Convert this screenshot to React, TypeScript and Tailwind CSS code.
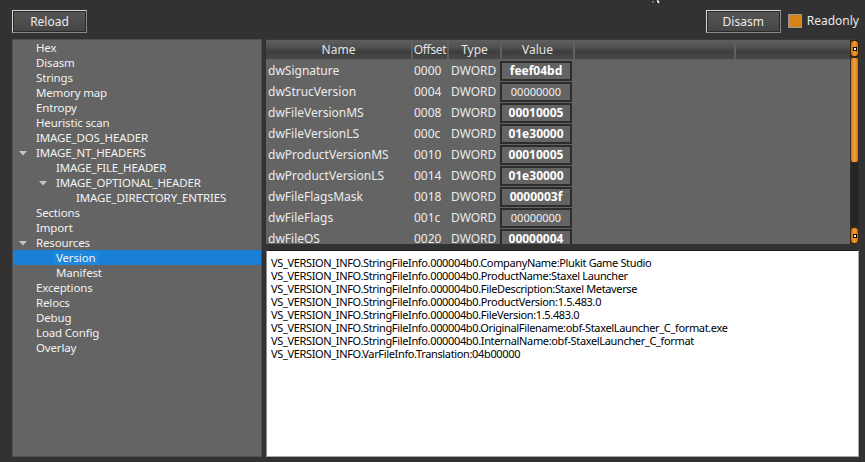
import React from 'react';

type Node = { label: string; level: number; open?: boolean; selected?: boolean };

const TREE: Node[] = [
  { label: 'Hex', level: 1 },
  { label: 'Disasm', level: 1 },
  { label: 'Strings', level: 1 },
  { label: 'Memory map', level: 1 },
  { label: 'Entropy', level: 1 },
  { label: 'Heuristic scan', level: 1 },
  { label: 'IMAGE_DOS_HEADER', level: 1 },
  { label: 'IMAGE_NT_HEADERS', level: 1, open: true },
  { label: 'IMAGE_FILE_HEADER', level: 2 },
  { label: 'IMAGE_OPTIONAL_HEADER', level: 2, open: true },
  { label: 'IMAGE_DIRECTORY_ENTRIES', level: 3 },
  { label: 'Sections', level: 1 },
  { label: 'Import', level: 1 },
  { label: 'Resources', level: 1, open: true },
  { label: 'Version', level: 2, selected: true },
  { label: 'Manifest', level: 2 },
  { label: 'Exceptions', level: 1 },
  { label: 'Relocs', level: 1 },
  { label: 'Debug', level: 1 },
  { label: 'Load Config', level: 1 },
  { label: 'Overlay', level: 1 },
];

type Row = { name: string; offset: string; value: string; bold: boolean };

const ROWS: Row[] = [
  { name: 'dwSignature', offset: '0000', value: 'feef04bd', bold: true },
  { name: 'dwStrucVersion', offset: '0004', value: '00000000', bold: false },
  { name: 'dwFileVersionMS', offset: '0008', value: '00010005', bold: true },
  { name: 'dwFileVersionLS', offset: '000c', value: '01e30000', bold: true },
  { name: 'dwProductVersionMS', offset: '0010', value: '00010005', bold: true },
  { name: 'dwProductVersionLS', offset: '0014', value: '01e30000', bold: true },
  { name: 'dwFileFlagsMask', offset: '0018', value: '0000003f', bold: true },
  { name: 'dwFileFlags', offset: '001c', value: '00000000', bold: false },
  { name: 'dwFileOS', offset: '0020', value: '00000004', bold: true },
];

const INFO = [
  'VS_VERSION_INFO.StringFileInfo.000004b0.CompanyName:Plukit Game Studio',
  'VS_VERSION_INFO.StringFileInfo.000004b0.ProductName:Staxel Launcher',
  'VS_VERSION_INFO.StringFileInfo.000004b0.FileDescription:Staxel Metaverse',
  'VS_VERSION_INFO.StringFileInfo.000004b0.ProductVersion:1.5.483.0',
  'VS_VERSION_INFO.StringFileInfo.000004b0.FileVersion:1.5.483.0',
  'VS_VERSION_INFO.StringFileInfo.000004b0.OriginalFilename:obf-StaxelLauncher_C_format.exe',
  'VS_VERSION_INFO.StringFileInfo.000004b0.InternalName:obf-StaxelLauncher_C_format',
  'VS_VERSION_INFO.VarFileInfo.Translation:04b00000',
];

const font = { fontFamily: '"Noto Sans", "Open Sans", sans-serif' };

const Btn = ({ children }: { children: React.ReactNode }) => (
  <button className="h-[23px] w-[75px] border border-[#d4d4d4] border-r-[#8a8a8a] border-b-[#8a8a8a] bg-[linear-gradient(to_bottom,#555555,#454545)] text-[12px] text-[#ececec] shadow-[inset_0_0_0_1px_#2a2a2a]">
    {children}
  </button>
);

const Arrow = () => (
  <svg width="8" height="5" viewBox="0 0 8 5" className="absolute top-[5px]" style={{ left: -14 }}>
    <path d="M0 0 H8 L4 4.5 Z" fill="#c4c4c4" />
  </svg>
);

const ScrollCap = () => (
  <div className="flex h-[15px] shrink-0 items-center justify-center rounded-[3px] bg-[linear-gradient(to_right,#c66e10,#f59a2a,#c66e10)] shadow-[0_0_0_1px_#3a2208]">
    <div className="flex h-[4px] w-[4px] items-center justify-center bg-black">
      <div className="h-[2px] w-[2px] bg-white" />
    </div>
  </div>
);

export default function App() {
  return (
    <div className="relative h-[462px] w-[865px] overflow-hidden bg-[#323232] text-[12px]" style={font}>
      {/* mouse cursor fragment */}
      <svg width="12" height="6" viewBox="0 0 12 6" className="absolute left-[650px] top-0">
        <path d="M1 0 L3 3 L5 2 Z M6 0 L8 4 L10 3 L9 0 Z" fill="#ffffff" stroke="#000" strokeWidth="0.6" />
      </svg>

      {/* top bar */}
      <div className="flex h-[39px] items-start pl-[12px] pr-[6px] pt-[10px]">
        <Btn>Reload</Btn>
        <div className="flex-1" />
        <Btn>Disasm</Btn>
        <div className="ml-[7px] mt-[4px] h-[14px] w-[14px] border border-[#9a9a9a] bg-[#d98216]" />
        <span className="ml-[5px] mt-[3px] text-[12px] leading-[16px] text-[#e8e8e8]">Readonly</span>
      </div>

      <div className="flex h-[418px] pl-[12px]">
        {/* tree */}
        <div className="w-[250px] shrink-0 border border-[#515151] bg-[#646464] text-[11.5px] tracking-[-0.15px]">
          {TREE.map((n) => (
            <div
              key={n.label}
              className={`relative flex h-[15px] items-center leading-[14px] ${n.selected ? 'bg-[#1a7fd6]' : ''}`}
            >
              <div className="relative" style={{ marginLeft: (n.level - 1) * 20 + 20 }}>
                {n.open && <Arrow />}
                <span className={`block pr-[4px] pl-[3px] text-[#f2f2f2] ${n.selected ? 'bg-[#1c87dc]' : ''}`}>
                  {n.label}
                </span>
              </div>
            </div>
          ))}
        </div>

        {/* right */}
        <div className="ml-[4px] flex w-[593px] flex-col">
          <div className="flex h-[205px] shrink-0 border-t border-[#3a3a3a]">
            <div className="flex w-[584px] flex-col overflow-hidden bg-[#646464]">
              <div className="flex h-[20px] shrink-0 border-b border-[#5e5e5e] bg-[linear-gradient(to_bottom,#5e5e5e,#505050_40%,#3d3d3d_62%,#4a4a4a)] text-[12px] leading-[19px] text-[#e4e4e4]">
                <div className="w-[145px] text-center">Name</div>
                <div className="w-[36px] border-l-2 border-[#5f5f5f] text-center tracking-[-0.3px]">Offset</div>
                <div className="w-[53px] border-l-2 border-[#5f5f5f] text-center">Type</div>
                <div className="w-[73px] border-l-2 border-[#5f5f5f] text-center">Value</div>
                <div className="w-[161px] border-l-2 border-[#5f5f5f]" />
                <div className="flex-1 border-l-2 border-[#5f5f5f]" />
              </div>
              {ROWS.map((r) => (
                <div key={r.name} className="flex h-[21px] shrink-0 items-center pt-[1px] text-[#ececec]">
                  <div className="w-[145px] pl-[2px]">{r.name}</div>
                  <div className="w-[36px] pl-[3px]">{r.offset}</div>
                  <div className="w-[53px] pl-[4px]">DWORD</div>
                  <div className="flex h-[20px] w-[72px] items-center justify-center border-2 border-[#2c2c2c]">
                    <span className={r.bold ? 'font-bold text-white' : 'text-[11px] text-[#f0f0f0]'}>{r.value}</span>
                  </div>
                </div>
              ))}
            </div>
            {/* scrollbar */}
            <div className="flex w-[9px] flex-col bg-[#2e2e2e] px-[1px] py-[1px]">
              <ScrollCap />
              <div className="mt-[2px] h-[104px] shrink-0 rounded-[2px] bg-[linear-gradient(to_right,#d5780f,#f7a035,#d27510)]" />
              <div className="mt-[1px] flex-1 bg-[#242424]" />
              <div className="mt-[2px]">
                <ScrollCap />
              </div>
            </div>
          </div>

          <div className="mt-[6px] h-[207px] w-[593px] border border-[#a8a8a8] border-t-[#1e1e1e] border-l-[#8c8c8c] bg-white px-[4px] pt-[5px] text-[11px] leading-[13px] tracking-[-0.35px] text-black">
            {INFO.map((l) => (
              <div key={l}>{l}</div>
            ))}
          </div>
        </div>
      </div>
    </div>
  );
}
